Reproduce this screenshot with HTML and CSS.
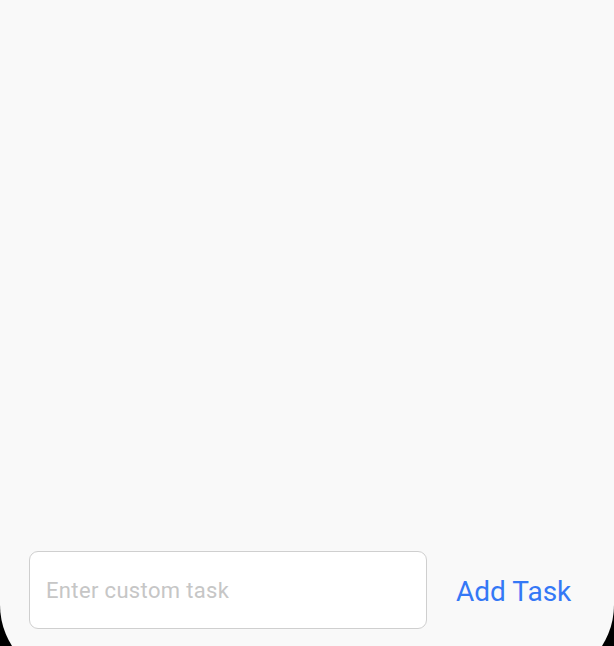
FILE: index.html
```html
<!DOCTYPE html>
<html>
<head>
<meta charset="utf-8">
<link rel="stylesheet" href="styles.css">
</head>
<body>
<div class="screen">
  <div class="content"></div>
  <div class="composer">
    <div class="field"><input class="task-input" type="text" placeholder="Enter custom task"></div>
    <button class="add-btn" type="button">Add Task</button>
  </div>
</div>
</body>
</html>
```
FILE: styles.css
```css
html, body {
  margin: 0;
  padding: 0;
  height: 646px;
  overflow: hidden;
  background: #000;
}
.screen {
  height: 681px;
  background: #f9f9f9;
  border-radius: 0 0 76px 76px;
  display: flex;
  flex-direction: column;
  font-family: Roboto, "Noto Sans", sans-serif;
}
.content {
  flex: 1;
}
.composer {
  display: flex;
  align-items: center;
  padding: 0 0 52px 29px;
}
.field {
  width: 398px;
  height: 78px;
  box-sizing: border-box;
  border: 1.5px solid #cfcfcf;
  border-radius: 9px;
  background: #fff;
  display: flex;
  align-items: center;
}
.task-input {
  border: none;
  outline: none;
  background: transparent;
  font-family: Roboto, "Noto Sans", sans-serif;
  font-size: 22px;
  letter-spacing: 0.35px;
  padding: 0 0 0 16px;
  width: 100%;
  color: #222;
}
.task-input::placeholder {
  color: #c6c6c6;
}
.add-btn {
  margin-left: 29px;
  border: none;
  background: none;
  padding: 0;
  font-family: Roboto, "Noto Sans", sans-serif;
  font-size: 28px;
  color: #3478f6;
  margin-top: 2px;
}
```
